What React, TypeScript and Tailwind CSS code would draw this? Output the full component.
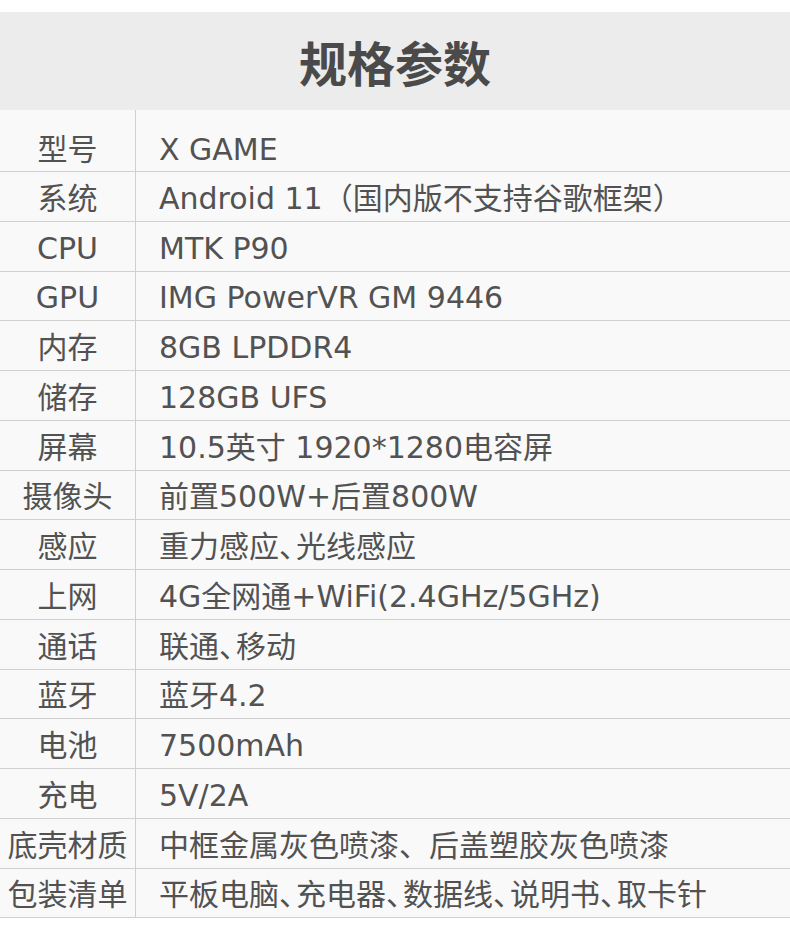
const specs: [string, string][] = [
	["型号", "X GAME"],
	["系统", "Android 11（国内版不支持谷歌框架）"],
	["CPU", "MTK P90"],
	["GPU", "IMG PowerVR GM 9446"],
	["内存", "8GB LPDDR4"],
	["储存", "128GB UFS"],
	["屏幕", "10.5英寸 1920*1280电容屏"],
	["摄像头", "前置500W+后置800W"],
	["感应", "重力感应、光线感应"],
	["上网", "4G全网通+WiFi(2.4GHz/5GHz)"],
	["通话", "联通、移动"],
	["蓝牙", "蓝牙4.2"],
	["电池", "7500mAh"],
	["充电", "5V/2A"],
	["底壳材质", "中框金属灰色喷漆、后盖塑胶灰色喷漆"],
	["包装清单", "平板电脑、充电器、数据线、说明书、取卡针"],
];

// most rows use a narrow 、 ; the shell row keeps the full-width one
const renderValue = (text: string, tight: boolean) => {
	if (!tight) return text;
	return text.split("、").map((part, i) => (
		<span key={part}>
			{i > 0 && <span className="tracking-[-13px]">、</span>}
			{part}
		</span>
	));
};

const App = () => {
	return (
		<div className="min-h-[943px] w-[790px] bg-white pt-[12px] font-['DejaVu_Sans','Noto_Sans_CJK_SC',sans-serif] text-[#525252]">
			{/* Title */}
			<div className="flex h-[98px] items-center justify-center bg-[#ececec]">
				<h1 className="font-['Noto_Sans_CJK_SC',sans-serif] text-[48px] font-bold leading-none text-[#4a4a4a]">
					规格参数
				</h1>
			</div>

			{/* Spec rows */}
			<div className="bg-[#f9f9f9]">
				{specs.map(([label, value], i) => (
					<div
						className={`flex border-b border-[#d0d0d0] ${i === 0 ? "h-[62px]" : "h-[49.75px]"}`}
						key={label}
					>
						<div
							className={`flex w-[136px] shrink-0 items-center justify-center border-r border-[#d0d0d0] text-[30px] leading-none ${i === 0 ? "pt-[19px]" : "pt-[5px]"}`}
						>
							{label}
						</div>
						<div className={`flex items-center pl-[23px] text-[30px] leading-none ${i === 0 ? "pt-[19px]" : "pt-[5px]"}`}>
							<span>{renderValue(value, i !== 14)}</span>
						</div>
					</div>
				))}
			</div>
		</div>
	);
};

export default App;
